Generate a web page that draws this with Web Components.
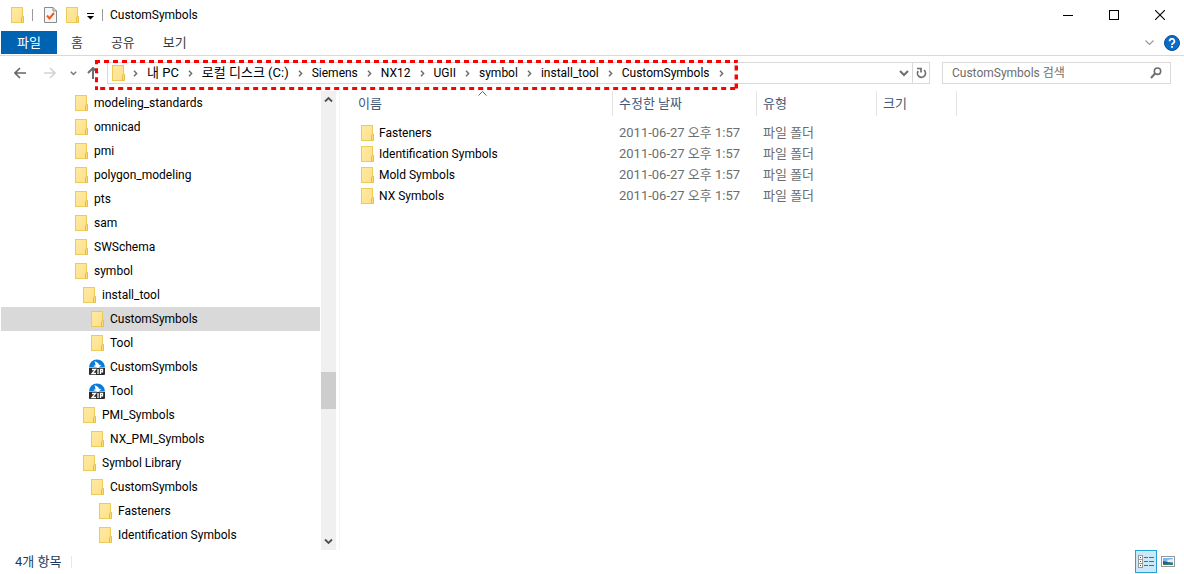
<!DOCTYPE html>
<html lang="ko">
<head>
<meta charset="utf-8">
<meta name="viewport" content="width=device-width, initial-scale=1">
<title>CustomSymbols</title>
<style>
  body {
    margin: 0;
    background: #fff;
    color: #000;
    font-family: Roboto, "Noto Sans CJK KR", sans-serif;
    font-size: 12px;
    line-height: 20px;
    --fs-ko: 13px;
    --line: #d9d9d9;
    --heading: #44597a;
    --muted: #6d6d6d;
  }
</style>
</head>
<body>
<explorer-window>
  <title-bar slot="title">CustomSymbols</title-bar>
  <ribbon-tabs slot="ribbon"></ribbon-tabs>
  <nav-bar slot="nav"></nav-bar>
  <folder-tree slot="tree">
    <tree-row level="0">modeling_standards</tree-row>
    <tree-row level="0">omnicad</tree-row>
    <tree-row level="0">pmi</tree-row>
    <tree-row level="0">polygon_modeling</tree-row>
    <tree-row level="0">pts</tree-row>
    <tree-row level="0">sam</tree-row>
    <tree-row level="0">SWSchema</tree-row>
    <tree-row level="0">symbol</tree-row>
    <tree-row level="1">install_tool</tree-row>
    <tree-row level="2" selected>CustomSymbols</tree-row>
    <tree-row level="2">Tool</tree-row>
    <tree-row level="2" icon="zip">CustomSymbols</tree-row>
    <tree-row level="2" icon="zip">Tool</tree-row>
    <tree-row level="1">PMI_Symbols</tree-row>
    <tree-row level="2">NX_PMI_Symbols</tree-row>
    <tree-row level="1">Symbol Library</tree-row>
    <tree-row level="2">CustomSymbols</tree-row>
    <tree-row level="3">Fasteners</tree-row>
    <tree-row level="3">Identification Symbols</tree-row>
  </folder-tree>
  <file-list slot="files"></file-list>
  <status-bar slot="status">4개 항목</status-bar>
</explorer-window>

<script>
const base = `<style>
  :host, * { box-sizing: border-box; }
  button, input { font: inherit; color: inherit; margin: 0; padding: 0; border: 0; background: none; }
  svg { display: block; flex: none; }
  a { color: inherit; text-decoration: none; }
</style>`;

function define(name, html) {
  customElements.define(name, class extends HTMLElement {
    constructor() {
      super();
      const t = document.createElement('template');
      t.innerHTML = base + (typeof html === 'function' ? html(this) : html);
      this.attachShadow({ mode: 'open' }).append(t.content.cloneNode(true));
    }
  });
}

define('folder-icon', `
  <style>:host { display: block; flex: none; width: 13px; height: 16px; }</style>
  <svg width="13" height="16" viewBox="0 0 13 16" aria-hidden="true">
    <defs><linearGradient id="g" x1="0" y1="0" x2="1" y2="1"><stop offset="0" stop-color="#ffeaa2"/><stop offset="1" stop-color="#fde08a"/></linearGradient></defs>
    <rect x=".5" y=".5" width="11" height="15" fill="url(#g)" stroke="#edcb59"/>
    <path d="M10.5 15.5v-5.200l1-1h1v6.200z" fill="#fbdc7c" stroke="#e6bf48"/>
  </svg>`);

define('zip-icon', `
  <style>:host { display: block; flex: none; width: 16px; height: 16px; }</style>
  <svg width="16" height="16" viewBox="0 0 16 16" aria-hidden="true">
    <path d="M0 8.500A8 8 0 0 1 16 8.500z" fill="#0a7bd8"/>
    <path d="M5.500 2l4 2.200.3 1.600 2.700.2-3.300 3L4 7l2.600-.8z" fill="#fff"/>
    <path d="M0 9h16v6a1 1 0 0 1-1 1H1a1 1 0 0 1-1-1z" fill="#2b2b2b"/>
    <path d="M3 10.500h3.500L3 14.500h4M9 10v5M11.500 15v-4.500h2v2.300h-2" fill="none" stroke="#fff" stroke-width="1.300"/>
  </svg>`);

define('explorer-window', `
  <style>
    :host { display: flex; flex-direction: column; min-height: 100vh; }
    main { flex: 1; display: grid; grid-template-columns: 340px minmax(0, 1fr); }
    .side { display: grid; padding: 0 3px 0 1px; border-right: 1px solid #f5f5f5; }
  </style>
  <slot name="title"></slot><slot name="ribbon"></slot><slot name="nav"></slot>
  <main><div class="side"><slot name="tree"></slot></div><slot name="files"></slot></main>
  <slot name="status"></slot>`);

define('title-bar', `
  <style>
    :host { display: flex; align-items: center; height: 31px; padding: 0 1px 1px 11px; }
    .sep { width: 1px; height: 12px; background: #9a9a9a; }
    .quick { display: flex; align-items: center; }
    .quick button { display: block; }
    .a { margin: 0 11px 0 8px; }
    .b { margin-right: 9px; }
    .c { margin: 2px 8px 0 8px; }
    h1 { margin: 0 0 0 7px; font: inherit; flex: 1; }
    .win { display: flex; }
    .win button { width: 46px; height: 30px; display: grid; place-items: center; }
  </style>
  <folder-icon></folder-icon><span class="sep a"></span>
  <div class="quick">
    <button class="b" aria-label="속성"><svg width="13" height="16" viewBox="0 0 13 16"><path d="M.5.5h8.500l3.500 3.500v11.500H.5z" fill="#f7f7f7" stroke="#8a8a8a"/><path d="M9 .5V4h3.500" fill="none" stroke="#8a8a8a"/><path d="M3 8.500l2.500 3L10 6" fill="none" stroke="#ec5b24" stroke-width="2"/></svg></button>
    <button aria-label="새 폴더"><folder-icon></folder-icon></button>
    <button class="c" aria-label="사용자 지정"><svg width="7" height="7" viewBox="0 0 7 7"><path d="M0 .5h7" stroke="#000"/><path d="M0 3h7L3.500 6.500z"/></svg></button>
  </div>
  <span class="sep"></span>
  <h1><slot></slot></h1>
  <div class="win">
    <button aria-label="최소화"><svg width="10" height="10"><path d="M0 5.500h10" stroke="#000"/></svg></button>
    <button aria-label="최대화"><svg width="10" height="10"><rect x=".5" y=".5" width="9" height="9" fill="none" stroke="#000"/></svg></button>
    <button aria-label="닫기"><svg width="10" height="10"><path d="M0 0l10 10M10 0L0 10" stroke="#000" stroke-width="1.100"/></svg></button>
  </div>`);

define('ribbon-tabs', `
  <style>
    :host { display: flex; height: 25px; padding: 0 4px 0 1px; border-bottom: 1px solid var(--line); font-size: var(--fs-ko); color: #3b3b3b; }
    nav { display: flex; flex: 1; height: 23px; }
    nav button { padding: 0 14px; line-height: 23px; }
    nav .file { padding: 0 16px; background: #0063b1; color: #fff; }
    .right { display: flex; align-items: center; gap: 10px; }
    .right button { display: block; }
    .help { width: 16px; height: 16px; }
  </style>
  <nav aria-label="리본"><button class="file">파일</button><button>홈</button><button>공유</button><button>보기</button></nav>
  <div class="right">
    <button aria-label="리본 확장"><svg width="9" height="6" viewBox="0 0 9 6"><path d="M.5.5l4 4 4-4" fill="none" stroke="#9b9b9b" stroke-width="1.200"/></svg></button>
    <button class="help" aria-label="도움말"><svg width="16" height="16" viewBox="0 0 16 16"><circle cx="8" cy="8" r="7.500" fill="#0b6bcb" stroke="#0a4f98"/><path d="M5.600 6.200a2.400 2.300 0 1 1 3.500 2Q8 8.800 8 10" fill="none" stroke="#fff" stroke-width="1.700"/><rect x="7.100" y="11" width="1.800" height="1.800" fill="#fff"/></svg></button>
  </div>`);

const chevron = '<svg class="chev" width="5" height="7" viewBox="0 0 5 7" aria-hidden="true"><path d="M1 .8l2.600 2.700L1 6.200" fill="none" stroke="#6e6e6e" stroke-width="1.500"/></svg>';

define('path-bar', () => {
  const crumbs = [['내 PC', 1], ['로컬 디스크 (C:)', 1], ['Siemens'], ['NX12'], ['UGII'], ['symbol'], ['install_tool'], ['CustomSymbols']];
  return `
  <style>
    :host { display: flex; flex: 1; min-width: 0; height: 22px; border: 1px solid var(--line); }
    nav { position: relative; display: flex; align-items: center; padding-left: 4px; }
    nav folder-icon { margin-right: 8px; }
    ol { display: flex; align-items: center; margin: 0; padding: 0; list-style: none; white-space: nowrap; }
    li { display: flex; align-items: center; }
    li a { margin: 0 9px; }
    .ko { font-size: var(--fs-ko); }
    .mark { position: absolute; left: -13px; top: -3px; width: calc(100% + 27px); height: 30px; overflow: hidden; pointer-events: none; z-index: 1; }
    .tools { display: flex; margin-left: auto; }
    .tools button { width: 17px; display: grid; place-items: center; }
    .tools .refresh { border-left: 1px solid var(--line); }
  </style>
  <nav aria-label="주소">
    <folder-icon></folder-icon>${chevron}
    <ol>${crumbs.map(([t, ko]) => `<li><a href="#"${ko ? ' class="ko"' : ''}>${t}</a>${chevron}</li>`).join('')}</ol>
    <svg class="mark" aria-hidden="true"><rect width="100%" height="100%" fill="none" stroke="#f00" stroke-width="6" stroke-dasharray="5 4"/></svg>
  </nav>
  <div class="tools">
    <button aria-label="이전 위치"><svg width="10" height="7" viewBox="0 0 10 7"><path d="M1 1l4 4 4-4" fill="none" stroke="#6e6e6e" stroke-width="2"/></svg></button>
    <button class="refresh" aria-label="새로 고침"><svg width="11" height="12" viewBox="0 0 11 12"><path d="M8 3.200A4 4 0 1 1 2.200 4" fill="none" stroke="#6e6e6e" stroke-width="1.700"/><path d="M1 1.500h4v4" fill="none" stroke="#6e6e6e" stroke-width="1.700"/></svg></button>
  </div>`;
});

define('search-box', `
  <style>
    :host { display: flex; width: 229px; height: 22px; border: 1px solid var(--line); }
    input { flex: 1; min-width: 0; padding-left: 9px; outline: 0; }
    input::placeholder { color: var(--muted); opacity: 1; }
    button { width: 28px; display: grid; place-items: center; }
  </style>
  <input type="search" aria-label="검색" placeholder="CustomSymbols 검색">
  <button aria-label="검색 실행"><svg width="12" height="12" viewBox="0 0 12 12"><circle cx="7.500" cy="4.200" r="3.200" fill="none" stroke="#6e6e6e" stroke-width="1.600"/><path d="M5 6.500L1 11" stroke="#6e6e6e" stroke-width="2"/></svg></button>`);

define('nav-bar', `
  <style>
    :host { display: flex; gap: 12px; padding: 6px 13px 7px 14px; }
    .moves { display: flex; align-items: center; margin-right: -4px; }
    .moves button { display: block; }
    .fwd { margin-left: 18px; }
    .recent { margin: 0 10px 0 14px; }
  </style>
  <div class="moves">
    <button aria-label="뒤로"><svg width="12" height="12" viewBox="0 0 12 12"><path d="M12 6H1.500M6 1L1 6l5 5" fill="none" stroke="#666" stroke-width="1.600"/></svg></button>
    <button class="fwd" aria-label="앞으로"><svg width="12" height="12" viewBox="0 0 12 12"><path d="M0 6h10.500M6 1l5 5-5 5" fill="none" stroke="#d4d4d4" stroke-width="1.600"/></svg></button>
    <button class="recent" aria-label="최근 위치"><svg width="7" height="5" viewBox="0 0 7 5"><path d="M.8.8l2.700 2.700L6.200.8" fill="none" stroke="#777" stroke-width="1.500"/></svg></button>
    <button aria-label="위로"><svg width="12" height="12" viewBox="0 0 12 12"><path d="M6 12V1.500M1 6l5-5 5 5" fill="none" stroke="#6e6e6e" stroke-width="2"/></svg></button>
  </div>
  <path-bar></path-bar>
  <search-box></search-box>`);

define('tree-row', el => {
  const icon = el.getAttribute('icon') === 'zip' ? 'zip-icon' : 'folder-icon';
  return `
  <style>
    :host { display: block; }
    :host([selected]) { background: #d9d9d9; }
    a { display: flex; align-items: center; height: 24px; padding-left: calc(72px + 8px * var(--level)); white-space: nowrap; }
    .icon { display: grid; place-items: center; width: 16px; margin-right: 5px; }
  </style>
  <a href="#" style="--level:${Number(el.getAttribute('level'))}"><span class="icon"><${icon}></${icon}></span><slot></slot></a>`;
});

define('folder-tree', `
  <style>
    :host { display: flex; gap: 1px; }
    nav { flex: 1; min-width: 0; }
    .bar { display: flex; flex-direction: column; width: 15px; background: #f0f0f0; }
    .bar button { height: 17px; display: grid; place-items: center; }
    .before { flex: 264; }
    .thumb { flex: 37; background: #cdcdcd; }
    .after { flex: 124; }
  </style>
  <nav aria-label="폴더"><slot></slot></nav>
  <div class="bar">
    <button aria-label="위로 스크롤"><svg width="9" height="7" viewBox="0 0 9 7"><path d="M1 5.500L4.500 2 8 5.500" fill="none" stroke="#505050" stroke-width="1.800"/></svg></button>
    <span class="before"></span><span class="thumb"></span><span class="after"></span>
    <button aria-label="아래로 스크롤"><svg width="9" height="7" viewBox="0 0 9 7"><path d="M1 1.500L4.500 5 8 1.500" fill="none" stroke="#505050" stroke-width="1.800"/></svg></button>
  </div>`);

define('file-list', () => {
  const names = ['Fasteners', 'Identification Symbols', 'Mold Symbols', 'NX Symbols'];
  return `
  <style>
    :host { display: block; padding-left: 12px; }
    table { table-layout: fixed; width: 605px; border-collapse: separate; border-spacing: 0; }
    th, td { padding: 0 0 0 6px; text-align: left; font-weight: 400; white-space: nowrap; }
    th { position: relative; height: 25px; border-right: 1px solid #e5e5e5; color: var(--heading); font-size: var(--fs-ko); }
    th svg { position: absolute; top: 0; left: calc(50% - 4px); }
    tbody::before { content: ""; display: block; height: 6px; }
    td { height: 21px; color: var(--muted); font-size: var(--fs-ko); }
    td a { display: flex; align-items: center; gap: 5px; padding-left: 3px; color: #000; font-size: 12px; }
    .name { width: 261px; } .date { width: 144px; } .type { width: 120px; } .size { width: 80px; }
  </style>
  <table>
    <thead><tr>
      <th class="name" aria-sort="ascending">이름<svg width="9" height="5" viewBox="0 0 9 5" aria-hidden="true"><path d="M.5 4.500l4-4 4 4" fill="none" stroke="#666"/></svg></th>
      <th class="date">수정한 날짜</th><th class="type">유형</th><th class="size">크기</th>
    </tr></thead>
    <tbody>${names.map(n => `<tr><td><a href="#"><folder-icon></folder-icon>${n}</a></td><td>2011-06-27 오후 1:57</td><td>파일 폴더</td><td></td></tr>`).join('')}</tbody>
  </table>`;
});

define('status-bar', `
  <style>
    :host { display: flex; align-items: center; height: 24px; padding: 0 6px 1px 15px; font-size: var(--fs-ko); color: #1e395b; }
    .sep { width: 1px; height: 12px; margin-left: 10px; background: #e8e8e8; }
    .views { display: flex; margin-left: auto; }
    .views button { width: 21px; height: 23px; display: grid; place-items: center; }
    .views .on { width: 22px; border: 1px solid #26a0da; background: #cbe8f6; }
  </style>
  <slot></slot><span class="sep"></span>
  <div class="views">
    <button class="on" aria-label="자세히" aria-pressed="true"><svg width="16" height="13" viewBox="0 0 16 13"><g fill="#fff" stroke="#9a9a9a"><rect x=".5" y=".5" width="4" height="4"/><rect x=".5" y="4.500" width="4" height="4"/><rect x=".5" y="8.500" width="4" height="4"/></g><path d="M2 2.500h1M2 6.500h1M2 10.500h1" stroke="#444"/><path d="M6 2.500h4M11 2.500h5M6 6.500h4M11 6.500h5M6 10.500h4M11 10.500h5" stroke="#666"/></svg></button>
    <button aria-label="큰 아이콘" aria-pressed="false"><svg width="14" height="11" viewBox="0 0 14 11"><rect x=".5" y=".5" width="13" height="10" fill="#fff" stroke="#969696"/><path d="M2 2h10v7H2z" fill="#7db8ea"/><path d="M6 4l6-1v3H7z" fill="#e3f1fb"/><path d="M2 5l4 1 6 1v2H2z" fill="#245a86"/><path d="M2 8l10-1v2H2z" fill="#3f7f66"/></svg></button>
  </div>`);
</script>
</body>
</html>
